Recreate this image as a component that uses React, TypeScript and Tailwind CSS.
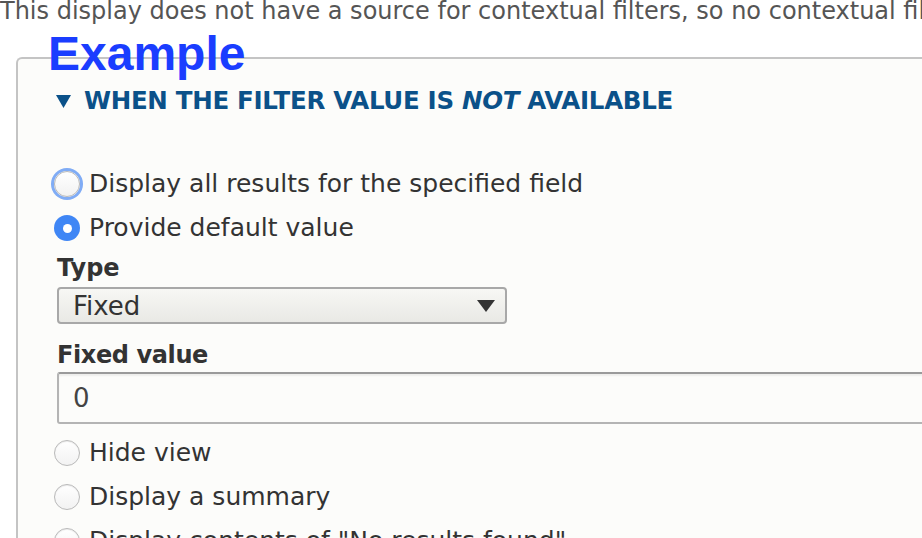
import React from "react";

function Radio({ checked = false, focus = false }: { checked?: boolean; focus?: boolean }) {
  if (checked) {
    return (
      <span className="relative -ml-[3px] flex h-[26px] w-[26px] shrink-0 items-center justify-center rounded-full bg-[#3f86f5]">
        <span className="h-[9px] w-[9px] rounded-full bg-white" />
      </span>
    );
  }
  return (
    <span
      className={
        "relative -ml-[3px] flex h-[26px] w-[26px] shrink-0 rounded-full border border-[#b9b9b9] bg-gradient-to-b from-[#ffffff] to-[#f2f2f2] " +
        (focus ? "shadow-[0_0_0_3px_#80acf5]" : "shadow-[inset_0_1px_1px_rgba(0,0,0,0.08)]")
      }
    />
  );
}

function RadioRow({ label, checked, focus }: { label: string; checked?: boolean; focus?: boolean }) {
  return (
    <div className="flex h-[44px] items-center gap-[9px]">
      <Radio checked={checked} focus={focus} />
      <span className="whitespace-nowrap text-[25px] leading-[28px] text-[#333333]">{label}</span>
    </div>
  );
}

export default function App() {
  return (
    <div
      className="relative h-[538px] w-[922px] overflow-hidden bg-white"
      style={{ fontFamily: '"DejaVu Sans", "Liberation Sans", sans-serif' }}
    >
      <p className="-mt-[3px] whitespace-nowrap text-[24px] leading-[28px] text-[#555555]">
        This display does not have a source for contextual filters, so no contextual filter value will be available.
      </p>

      <div className="ml-[16px] mr-[-40px] mt-[32px] h-[600px] rounded-tl-[6px] border-l-2 border-t-2 border-[#c4c4c4] bg-[#fcfcfa]">
        <div className="flex items-center gap-[13px] pl-[38px] pt-[28px]">
          <svg width="15" height="13" viewBox="0 0 15 13">
            <polygon points="0,0 15,0 7.5,13" fill="#0b5189" />
          </svg>
          <span className="whitespace-nowrap text-[24.5px] font-bold leading-[28px] tracking-[-0.3px] text-[#0b5189]">
            WHEN THE FILTER VALUE IS <em className="italic">NOT</em> AVAILABLE
          </span>
        </div>

        <div className="pl-[39px] pt-[47px]">
          <RadioRow label="Display all results for the specified field" focus />
          <RadioRow label="Provide default value" checked />
          <div className="mt-[4px] text-[24px] font-bold leading-[28px] text-[#333333]">Type</div>
          <div className="mt-[5px] flex h-[37px] w-[450px] items-center justify-between rounded-[4px] border-2 border-[#a8a8a8] bg-gradient-to-b from-[#f7f7f4] to-[#e9e9e5] pl-[14px] pr-[10px]">
            <span className="text-[26px] leading-[28px] text-[#333333]">Fixed</span>
            <svg width="18" height="12" viewBox="0 0 18 12">
              <polygon points="0,0 18,0 9,12" fill="#333333" />
            </svg>
          </div>
          <div className="mt-[17px] text-[24px] font-bold leading-[28px] tracking-[-0.4px] text-[#333333]">Fixed value</div>
          <div className="mt-[3px] flex h-[52px] items-center rounded-[3px] border-2 border-[#b4b4b4] border-t-[#9a9a9a] bg-[#fcfcfa] pl-[14px] shadow-[inset_0_2px_2px_rgba(0,0,0,0.06)]">
            <span className="text-[26px] leading-[28px] text-[#444444]">0</span>
          </div>
          <div className="mt-[7px]">
            <RadioRow label="Hide view" />
            <RadioRow label="Display a summary" />
            <RadioRow label={'Display contents of "No results found"'} />
          </div>
        </div>
      </div>

      <div
        className="absolute left-[48px] top-[26px] text-[48px] font-bold leading-[56px] text-[#1a3dff]"
        style={{ fontFamily: '"Liberation Sans", Arial, sans-serif' }}
      >
        Example
      </div>
    </div>
  );
}
